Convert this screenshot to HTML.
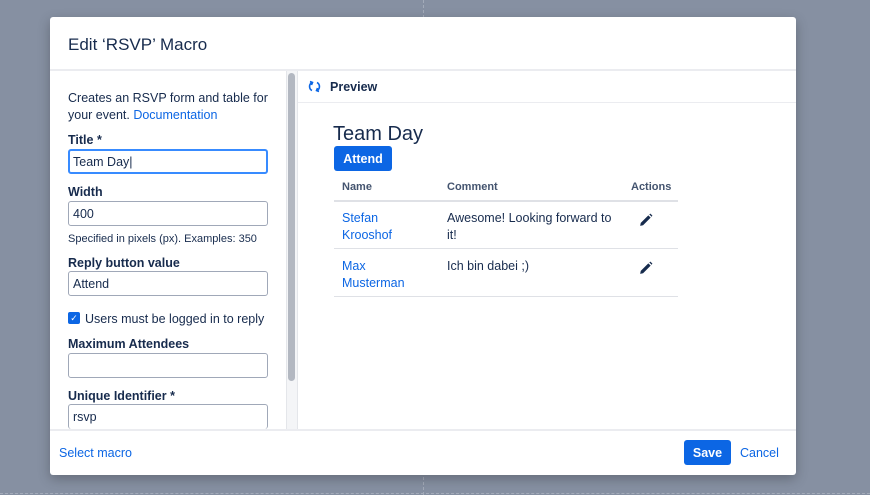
<!DOCTYPE html>
<html><head><style>
*{box-sizing:border-box;margin:0;padding:0}
body{width:870px;height:495px;background:#8690a2;position:relative;overflow:hidden;font-family:"Liberation Sans",sans-serif;color:#172b4d;font-size:12.5px}
.a{position:absolute}
.modal{left:50px;top:17px;width:746px;height:458px;background:#fff;border-radius:3px;box-shadow:0 4px 12px rgba(0,0,0,.25)}
.lbl{font-weight:bold;font-size:12.5px;left:18px}
.in{left:18px;width:200px;height:25px;border:1px solid #a0a8b8;border-radius:3px;padding:5px 4px;font-size:12.5px}
.link{color:#0c66e4}
</style></head><body>
<div class="a" style="left:423px;top:0;height:495px;border-left:1px dashed #a3abb9"></div>
<div class="a" style="left:0;top:493px;width:870px;border-top:1px dashed #a3abb9"></div>
<div class="a modal">
  <div class="a" style="left:18px;top:18px;font-size:17px">Edit ‘RSVP’ Macro</div>
  <div class="a" style="left:0;top:52px;width:746px;border-top:2px solid #ebecf0"></div>
  <div class="a" style="left:0;top:412px;width:746px;border-top:2px solid #ebecf0"></div>
  <div class="a" style="left:18px;top:73px;line-height:17px;width:210px">Creates an RSVP form and table for your event. <span class="link">Documentation</span></div>
  <div class="a lbl" style="top:116px">Title *</div>
  <div class="a in" style="top:132px;border:2px solid #388bff;padding:4px 3px">Team Day|</div>
  <div class="a lbl" style="top:168px">Width</div>
  <div class="a in" style="top:184px">400</div>
  <div class="a" style="left:18px;top:216px;font-size:11px">Specified in pixels (px). Examples: 350</div>
  <div class="a lbl" style="top:239px">Reply button value</div>
  <div class="a in" style="top:254px">Attend</div>
  <div class="a" style="left:18px;top:295px;width:12px;height:12px;background:#0c66e4;border-radius:2px;color:#fff;font-size:9px;text-align:center;line-height:12px">✓</div>
  <div class="a" style="left:35px;top:295px">Users must be logged in to reply</div>
  <div class="a lbl" style="top:320px">Maximum Attendees</div>
  <div class="a in" style="top:336px"></div>
  <div class="a lbl" style="top:372px">Unique Identifier *</div>
  <div class="a in" style="top:387px;height:25px;border-bottom:none">rsvp</div>
  <div class="a" style="left:236px;top:54px;width:12px;height:358px;background:#f4f5f7;border-left:1px solid #e4e6ea;border-right:1px solid #e4e6ea"></div>
  <div class="a" style="left:238px;top:56px;width:7px;height:308px;background:#b3b8c1;border-radius:4px"></div>
  <div class="a" style="left:248px;top:85px;width:498px;border-top:1px solid #ebecf0"></div>
  <svg class="a" style="left:258px;top:63px" width="13" height="13" viewBox="0 0 13 13" fill="none" stroke="#0c66e4" stroke-width="1.6"><path d="M4 2.5 A4.5 4.5 0 0 0 4 10.5"/><path d="M9 10.5 A4.5 4.5 0 0 0 9 2.5"/><path d="M2 1.5 L4.5 2.5 L3.5 5" /><path d="M11 11.5 L8.5 10.5 L9.5 8"/></svg>
  <div class="a" style="left:280px;top:63px;font-weight:bold">Preview</div>
  <div class="a" style="left:283px;top:106px;font-size:20px">Team Day</div>
  <div class="a" style="left:284px;top:129px;width:58px;height:25px;background:#0c66e4;border-radius:3px;color:#fff;font-weight:bold;text-align:center;line-height:26px">Attend</div>
  <div class="a" style="left:292px;top:164px;font-size:11px;font-weight:bold;color:#44546f">Name</div>
  <div class="a" style="left:397px;top:164px;font-size:11px;font-weight:bold;color:#44546f">Comment</div>
  <div class="a" style="left:581px;top:164px;font-size:11px;font-weight:bold;color:#44546f">Actions</div>
  <div class="a" style="left:284px;top:183px;width:344px;border-top:2px solid #dfe1e6"></div>
  <div class="a link" style="left:292px;top:193px;line-height:17px">Stefan<br>Krooshof</div>
  <div class="a" style="left:397px;top:193px;line-height:17px">Awesome! Looking forward to<br>it!</div>
  <div class="a" style="left:284px;top:231px;width:344px;border-top:1px solid #dfe1e6"></div>
  <div class="a link" style="left:292px;top:241px;line-height:17px">Max<br>Musterman</div>
  <div class="a" style="left:397px;top:241px;line-height:17px">Ich bin dabei ;)</div>
  <div class="a" style="left:284px;top:279px;width:344px;border-top:1px solid #dfe1e6"></div>
  <svg class="a" style="left:589px;top:196px" width="14" height="14" viewBox="0 0 12 12"><path d="M1 11 L1.5 8.5 L8 2 L10 4 L3.5 10.5 Z M8.8 1.2 L9.8 0.5 L11.5 2.2 L10.8 3.2 Z" fill="#172b4d"/></svg>
  <svg class="a" style="left:589px;top:244px" width="14" height="14" viewBox="0 0 12 12"><path d="M1 11 L1.5 8.5 L8 2 L10 4 L3.5 10.5 Z M8.8 1.2 L9.8 0.5 L11.5 2.2 L10.8 3.2 Z" fill="#172b4d"/></svg>
  <div class="a link" style="left:9px;top:429px">Select macro</div>
  <div class="a" style="left:634px;top:423px;width:47px;height:25px;background:#0c66e4;border-radius:3px;color:#fff;font-weight:bold;text-align:center;line-height:27px">Save</div>
  <div class="a link" style="left:690px;top:429px">Cancel</div>
</div>
</body></html>
